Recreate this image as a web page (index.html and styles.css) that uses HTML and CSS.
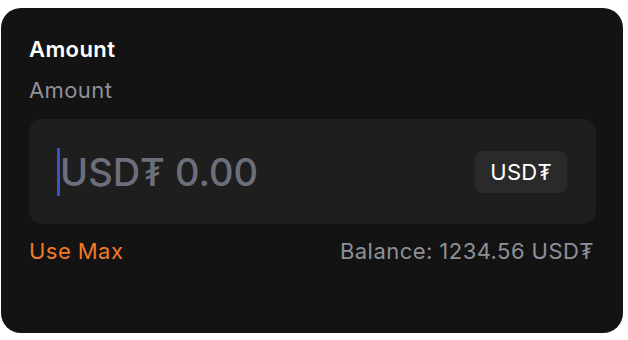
FILE: index.html
```html
<!DOCTYPE html>
<html>
<head>
<meta charset="utf-8">
<link rel="stylesheet" href="styles.css">
</head>
<body>
<div class="card">
  <div class="title">Amount</div>
  <div class="label">Amount</div>
  <div class="field">
    <div class="input"><span class="caret"></span><span class="placeholder">USD₮ 0.00</span></div>
    <div class="token">USD₮</div>
  </div>
  <div class="footer">
    <span class="max">Use Max</span>
    <span class="balance">Balance: 1234.56 USD₮</span>
  </div>
</div>
</body>
</html>
```
FILE: styles.css
```css
html, body { margin: 0; padding: 0; background: #ffffff; }
body { padding: 8px 0 0 1px; font-family: Inter, "Noto Sans", sans-serif; }
.card {
  width: 622px;
  height: 325px;
  box-sizing: border-box;
  background: #131313;
  border-radius: 20px;
  padding: 28px 27px 0 28px;
}
.title { color: #ffffff; font-size: 22px; line-height: 26px; font-weight: 600; letter-spacing: 0.4px; }
.label { color: #8e9099; font-size: 22px; line-height: 26px; margin-top: 15px; letter-spacing: 0.4px; }
.field {
  margin-top: 16px;
  height: 105px;
  background: #1e1e1e;
  border-radius: 14px;
  display: flex;
  align-items: center;
  justify-content: space-between;
  padding: 0 29px 0 28px;
}
.input { display: flex; align-items: center; }
.caret { width: 3px; height: 48px; background: #3a56c4; border-radius: 1px; }
.placeholder { color: #6c6f7b; font-size: 38px; line-height: 46px; font-weight: 500; letter-spacing: 0px; }
.token {
  background: #2a2a2a;
  color: #ffffff;
  font-size: 22px;
  letter-spacing: 0.3px;
  border-radius: 8px;
  height: 42px;
  padding: 0 15px;
  display: flex;
  align-items: center;
}
.footer {
  margin-top: 14px;
  display: flex;
  justify-content: space-between;
  font-size: 22px;
  line-height: 26px;
  letter-spacing: 0.45px;
  padding-right: 2px;
}
.max { color: #f07a2a; }
.balance { color: #8e9099; }
```
